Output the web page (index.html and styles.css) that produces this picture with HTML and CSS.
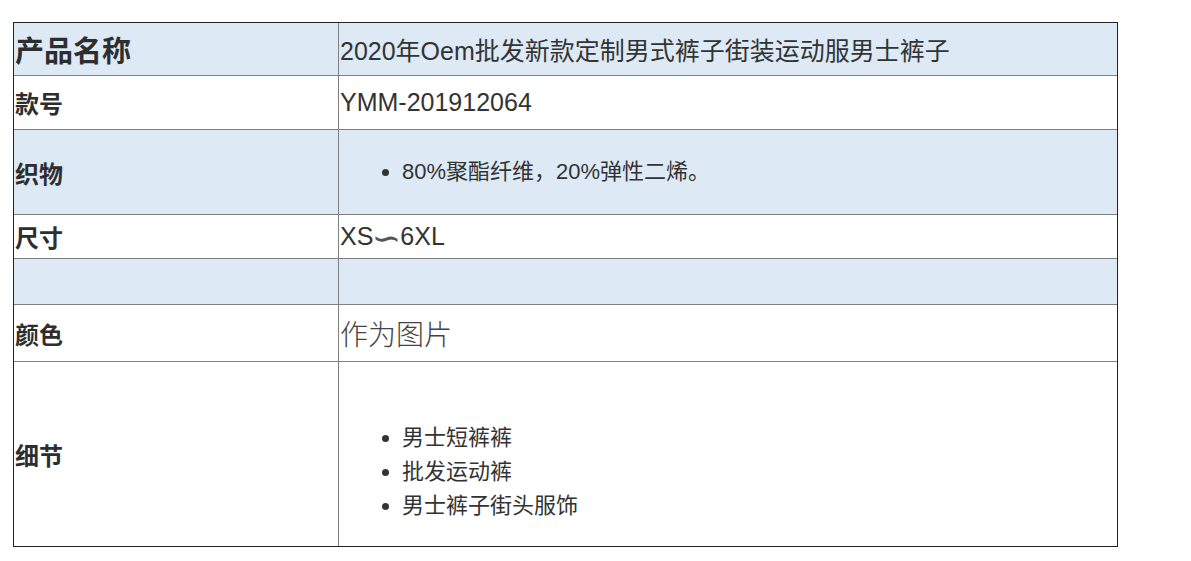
FILE: index.html
```html
<!DOCTYPE html>
<html lang="zh-CN">
<head>
<meta charset="utf-8">
<title>产品详情</title>
<link rel="stylesheet" href="styles.css">
</head>
<body>
<table class="spec">
  <colgroup>
    <col class="col-label">
    <col class="col-value">
  </colgroup>
  <tbody>
    <tr class="row row-title shade">
      <td class="label label-big">产品名称</td>
      <td class="value">2020年Oem批发新款定制男式裤子街装运动服男士裤子</td>
    </tr>
    <tr class="row row-code">
      <td class="label">款号</td>
      <td class="value">YMM-201912064</td>
    </tr>
    <tr class="row row-fabric shade">
      <td class="label">织物</td>
      <td class="value">
        <ul class="items">
          <li>80%聚酯纤维，20%弹性二烯。</li>
        </ul>
      </td>
    </tr>
    <tr class="row row-size">
      <td class="label">尺寸</td>
      <td class="value">XS<span class="wave">∽</span>6XL</td>
    </tr>
    <tr class="row row-empty shade">
      <td class="label"></td>
      <td class="value"></td>
    </tr>
    <tr class="row row-color">
      <td class="label">颜色</td>
      <td class="value value-light">作为图片</td>
    </tr>
    <tr class="row row-detail">
      <td class="label">细节</td>
      <td class="value">
        <ul class="items items-detail">
          <li>男士短裤裤</li>
          <li>批发运动裤</li>
          <li>男士裤子街头服饰</li>
        </ul>
      </td>
    </tr>
  </tbody>
</table>
</body>
</html>
```

FILE: styles.css
```css
html, body {
  margin: 0;
  padding: 0;
  background: #ffffff;
}

body {
  font-family: "Liberation Sans", "Noto Sans CJK SC", sans-serif;
  color: #333333;
}

.spec {
  margin: 22px 0 0 13px;
  width: 1105px;
  table-layout: fixed;
  border-collapse: separate;
  border-spacing: 0;
  border: 1px solid #222222;
}

.col-label { width: 325px; }

.spec td {
  padding: 0 1px;
  vertical-align: middle;
  border-right: 1px solid #808080;
  border-bottom: 1px solid #808080;
}

.spec td:last-child { border-right: none; }
.spec tr:last-child td { border-bottom: none; }

.shade td { background: #ddeaf6; }

.row-title { height: 53px; }
.row-code { height: 54px; }
.row-fabric { height: 85px; }
.row-size { height: 44px; }
.row-empty { height: 46px; }
.row-color { height: 57px; }
.row-detail { height: 184px; }

.label {
  font-weight: bold;
  font-size: 24px;
  color: #2e2e2e;
}

.label-big { font-size: 29px; }

.value {
  font-size: 25px;
  color: #333333;
}

.wave {
  display: inline-block;
  font-family: "DejaVu Sans", sans-serif;
  color: #555555;
  margin: 0 3px;
  transform: translateY(2px) scale(1.4, 1.4);
}

.value-light {
  font-size: 28px;
  font-weight: 300;
  color: #444444;
}

.items {
  margin: 0;
  padding-left: 62px;
  font-size: 22px;
  line-height: 34px;
}

.items-detail { margin-top: 35px; }
```
